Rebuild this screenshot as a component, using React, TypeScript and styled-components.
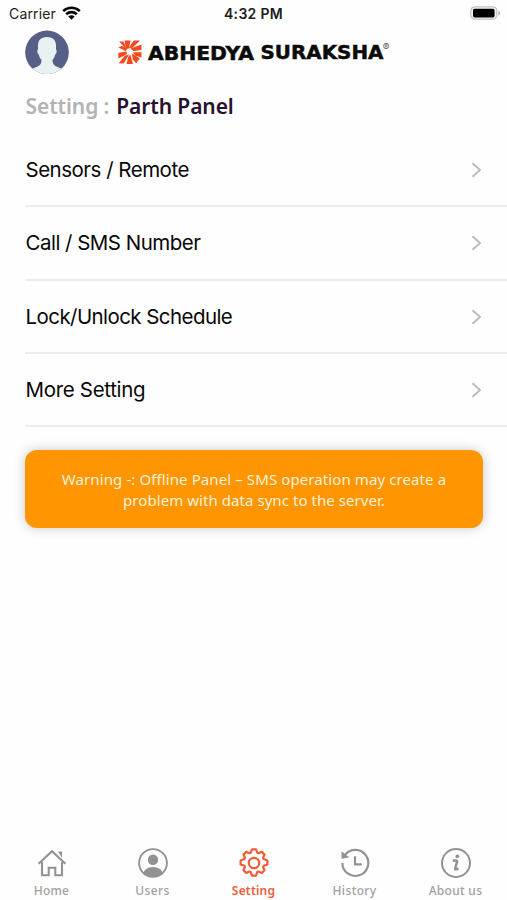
import React from "react";
import styled, { createGlobalStyle } from "styled-components";

const GlobalStyle = createGlobalStyle`
  * { box-sizing: border-box; }
  body { margin: 0; background: #fefefe; font-family: Inter, "Liberation Sans", sans-serif; }
  svg { display: block; flex: none; }
`;

const Screen = styled.div`
  width: 507px;
  height: 900px;
  display: flex;
  flex-direction: column;
  overflow: hidden;
  background: #fefefe;
`;

const StatusBar = styled.div`
  height: 28px;
  flex: none;
  display: grid;
  grid-template-columns: 1fr auto 1fr;
  align-items: center;
  padding: 0 6px 0 9px;
  color: #1c1c1c;
`;

const Carrier = styled.div`
  display: flex;
  align-items: center;
  gap: 6px;
  font-size: 14px;
  line-height: 20px;
  letter-spacing: 0.15px;

  svg {
    margin-top: -2px;
  }
`;

const Clock = styled.div`
  margin-right: 3px;
  font-size: 14px;
  font-weight: 600;
  line-height: 20px;
  letter-spacing: 0.3px;
`;

const Battery = styled.div`
  justify-self: end;
  margin-top: -2px;
`;

const Header = styled.header`
  height: 50px;
  flex: none;
  display: flex;
  align-items: flex-start;
  padding: 2px 0 0 25px;
  gap: 47px;
`;

const Brand = styled.div`
  padding-top: 8px;
`;

const Title = styled.h1`
  margin: 0;
  height: 56px;
  flex: none;
  padding: 13px 0 0 25.5px;
  font-family: "Noto Sans", sans-serif;
  font-size: 21px;
  font-weight: 600;
  line-height: 30px;
  letter-spacing: -0.1px;
  color: #28102f;
  white-space: pre;
`;

const TitleLabel = styled.span`
  color: #b5b2b5;
  margin-right: 7px;
`;

const List = styled.ul`
  list-style: none;
  margin: 0;
  padding: 0 0 0 25px;
  flex: none;
`;

const Row = styled.li`
  height: 73.25px;
  display: flex;
  align-items: center;
  justify-content: space-between;
  padding: 1px 25px 0 0.5px;
  border-bottom: 2px solid #ededed;
  color: #080808;
`;

const RowLabel = styled.span<{ $track: number }>`
  font-size: 20.5px;
  line-height: 28px;
  letter-spacing: ${(p) => p.$track}px;
`;

const Warning = styled.div`
  flex: none;
  margin: 23px 24px 0 25px;
  height: 78px;
  border-radius: 12px;
  background: #ff9500;
  box-shadow: 0 0 12px rgba(0, 0, 0, 0.22);
  padding: 19px 0;
  display: flex;
  flex-direction: column;
  align-items: center;
  color: #fff1d8;
  font-family: "Noto Sans", sans-serif;
  font-size: 15px;
`;

const WarningLine = styled.span<{ $track: number }>`
  line-height: 20.5px;
  white-space: nowrap;
  letter-spacing: ${(p) => p.$track}px;
`;

const TabBar = styled.nav`
  margin-top: auto;
  height: 56px;
  flex: none;
  display: grid;
  grid-template-columns: repeat(5, 101px);
  padding-left: 1px;
`;

const Tab = styled.div<{ $active?: boolean }>`
  display: flex;
  flex-direction: column;
  align-items: center;
  padding-top: 4px;
  gap: 5px;
  color: ${(p) => (p.$active ? "#f35b36" : "#929292")};
`;

const TabLabel = styled.span<{ $track: number; $active?: boolean }>`
  font-family: "Noto Sans", sans-serif;
  font-size: 12px;
  font-weight: ${(p) => (p.$active ? 600 : 500)};
  line-height: 16px;
  letter-spacing: ${(p) => p.$track}px;
  color: ${(p) => (p.$active ? "#f35b36" : "#a0a0a0")};
`;

const WifiIcon = () => (
  <svg width="19" height="14" viewBox="0 0 19 14" fill="none" stroke="#080808" strokeWidth="2.6">
    <path d="M1.2 5.1a12 12 0 0 1 16.6 0" />
    <path d="M4.2 8.2a7.7 7.7 0 0 1 10.6 0" />
    <path d="M9.5 13.7 6.3 10.5a4.6 4.6 0 0 1 6.4 0Z" fill="#080808" stroke="none" />
  </svg>
);

const BatteryIcon = () => (
  <svg width="31" height="14" viewBox="0 0 31 14">
    <rect x="0.8" y="0.8" width="26" height="12.4" rx="4" fill="#f4f4f4" stroke="#c4c4c4" strokeWidth="1.3" />
    <rect x="3" y="2.8" width="21.6" height="8.6" rx="1.6" fill="#000" />
    <path d="M28.4 4.7c2.4.8 2.4 3.8 0 4.6Z" fill="#b5b5b5" />
  </svg>
);

const Avatar = () => (
  <svg width="45" height="45" viewBox="0 0 45 45">
    <defs>
      <clipPath id="avatarClip">
        <circle cx="22" cy="22.3" r="21.8" />
      </clipPath>
    </defs>
    <g clipPath="url(#avatarClip)">
      <rect width="45" height="45" fill="#565f86" />
      <path
        d="M22 7C15.5 7 13 10.5 13 16v3.5c-1.3.3-.6 4.5.9 5.200.4 2.200 1.300 3.800 2.500 5.100.3 3.500-.8 5.200-3.300 6.400L5.500 39.500V46h33v-6.500l-7.600-3.300c-2.500-1.200-3.600-2.900-3.300-6.400 1.200-1.300 2.100-2.900 2.500-5.100 1.500-.7 2.200-4.900.9-5.200V16c0-5.500-2.500-9-9-9Z"
        fill="#e9f1f3"
      />
    </g>
  </svg>
);

const BrandLogo = () => (
  <svg width="276" height="28" viewBox="0 0 276 28">
    <g fill="#f4491f">
      <path d="M7.600 2.500h6L11.800 10.300 9 11.600Z" />
      <path d="M16.800 2.500h6.200L15.500 9.800 11.200 10.500Z" />
      <path d="M24.500 6.500v5.200L16.500 13.200l-3-2.800Z" />
      <path d="M15.900 14.200h8.600v5.200l-6-1.700Z" />
      <path d="M14.900 15.300l7.900 5.300-3.700 4.700-3.300-4Z" />
      <path d="M13.200 16.500l2.800 9.500H9.500l1.700-7Z" />
      <path d="M12.300 16.200 6.700 25.500 1.800 25.300 7.500 18Z" />
      <path d="M9.700 13.500 9.900 16.200 1.400 20.500v-5.800Z" />
      <path d="M1.400 9.500 4.500 8l5.400 1.500-.9 3.700Z" />
      <path d="M2.200 3.400h4.200l2.400 5.300-1.600.3Z" />
    </g>
    <g
      fill="#0b0b0b"
      stroke="#0b0b0b"
      strokeWidth="0.5"
      fontFamily="'DejaVu Sans', sans-serif"
      fontWeight="700"
      fontSize="19.200"
    >
      <text x="31" y="21.600" textLength="106" lengthAdjust="spacingAndGlyphs">ABHEDYA</text>
      <text x="143.500" y="20.900" textLength="123" lengthAdjust="spacingAndGlyphs">SURAKSHA</text>
    </g>
    <text x="265.800" y="12.500" fill="#555" fontFamily="Inter, sans-serif" fontSize="10">®</text>
  </svg>
);

const Chevron = () => (
  <svg width="11" height="16" viewBox="0 0 11 16" fill="none" stroke="#bcbcbe" strokeWidth="2">
    <path d="m1.500 1.300 7.500 6.700-7.500 6.700" />
  </svg>
);

const HomeIcon = () => (
  <svg width="30" height="30" viewBox="0 0 30 30" fill="none" stroke="currentColor" strokeWidth="2.100">
    <path d="M1.600 15.700 15 3.200l13.400 12.500" />
    <path d="M5 14v13.300h6.700v-7.500h6.600v7.500H25V14" />
    <path d="M21 3.500h4v6.200Z" fill="currentColor" stroke="none" />
  </svg>
);

const UsersIcon = () => (
  <svg width="30" height="30" viewBox="0 0 30 30">
    <defs>
      <clipPath id="userClip">
        <circle cx="15" cy="15" r="13.500" />
      </clipPath>
    </defs>
    <circle cx="15" cy="15" r="13.900" fill="none" stroke="currentColor" strokeWidth="1.900" />
    <circle cx="15" cy="11.800" r="5.200" fill="currentColor" />
    <ellipse cx="15" cy="26" rx="9.800" ry="7" fill="currentColor" clipPath="url(#userClip)" />
  </svg>
);

const GearIcon = () => (
  <svg width="30" height="30" viewBox="0 0 30 30" fill="none" stroke="currentColor" strokeWidth="2.200" strokeLinejoin="round">
    <circle cx="15" cy="15" r="5.200" />
    <path d="m11.700 4.700 1.300-3.300h4l1.300 3.300 1.200.5 3.200-1.400 2.800 2.800-1.400 3.200.5 1.200 3.800 1.500v4l-3.800 1.300-.5 1.200 1.400 3.200-2.800 2.800-3.200-1.400-1.200.5-1.300 3.500h-4l-1.300-3.500-1.200-.5-3.200 1.400-2.800-2.800 1.400-3.200-.5-1.200-3.800-1.300v-4l3.800-1.500.5-1.200-1.400-3.200 2.800-2.800 3.200 1.400Z" />
  </svg>
);

const HistoryIcon = () => (
  <svg width="30" height="30" viewBox="0 0 30 30" fill="none" stroke="currentColor" strokeWidth="2.200">
    <path d="M5 7A13 13 0 1 1 2.300 15" />
    <path d="M1.500 3.200 1.500 10.800l7.900-1.300Z" fill="currentColor" stroke="none" />
    <path d="M15 8.200v8.100h6.800" />
  </svg>
);

const InfoIcon = () => (
  <svg width="30" height="30" viewBox="0 0 30 30" fill="none" stroke="currentColor">
    <circle cx="15" cy="15" r="14" strokeWidth="2" />
    <circle cx="16.400" cy="8.300" r="1.900" fill="currentColor" stroke="none" />
    <path d="M11.800 12.800c2.500-.4 4.700-.8 4.300.9l-1.900 6.600c-.4 1.800 1.600 1.200 3.200-.1" strokeWidth="2.400" />
  </svg>
);

const rows = [
  { label: "Sensors / Remote", track: -0.5 },
  { label: "Call / SMS Number", track: -0.52 },
  { label: "Lock/Unlock Schedule", track: -0.57 },
  { label: "More Setting", track: -0.32 },
];

const tabs = [
  { label: "Home", Icon: HomeIcon, track: 0.2 },
  { label: "Users", Icon: UsersIcon, track: 0.45 },
  { label: "Setting", Icon: GearIcon, track: 0.2, active: true },
  { label: "History", Icon: HistoryIcon, track: 0.4 },
  { label: "About us", Icon: InfoIcon, track: 0.3 },
];

export default function App() {
  return (
    <Screen>
      <GlobalStyle />
      <StatusBar>
        <Carrier>
          Carrier
          <WifiIcon />
        </Carrier>
        <Clock>4:32 PM</Clock>
        <Battery>
          <BatteryIcon />
        </Battery>
      </StatusBar>
      <Header>
        <Avatar />
        <Brand>
          <BrandLogo />
        </Brand>
      </Header>
      <Title>
        <TitleLabel>Setting :</TitleLabel>
        Parth Panel
      </Title>
      <List>
        {rows.map((row) => (
          <Row key={row.label}>
            <RowLabel $track={row.track}>{row.label}</RowLabel>
            <Chevron />
          </Row>
        ))}
      </List>
      <Warning>
        <WarningLine $track={0.1}>Warning -: Offline Panel – SMS operation may create a</WarningLine>
        <WarningLine $track={0.06}>problem with data sync to the server.</WarningLine>
      </Warning>
      <TabBar>
        {tabs.map(({ label, Icon, track, active }) => (
          <Tab key={label} $active={active}>
            <Icon />
            <TabLabel $track={track} $active={active}>
              {label}
            </TabLabel>
          </Tab>
        ))}
      </TabBar>
    </Screen>
  );
}
